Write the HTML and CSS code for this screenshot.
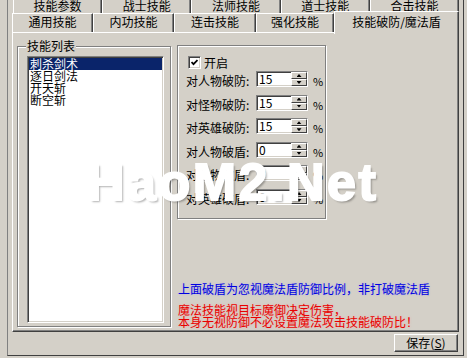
FILE: index.html
```html
<!DOCTYPE html>
<html lang="zh-CN">
<head>
<meta charset="utf-8">
<title>技能破防/魔法盾</title>
<link rel="stylesheet" href="styles.css">
</head>
<body>
<div class="frame">
  <div class="tabctl">
    <div class="row row1">
      <div class="tab">技能参数</div>
      <div class="tab">战士技能</div>
      <div class="tab">法师技能</div>
      <div class="tab">道士技能</div>
      <div class="tab">合击技能</div>
    </div>
    <div class="row row2">
      <div class="tab w81">通用技能</div>
      <div class="tab w81">内功技能</div>
      <div class="tab w82">连击技能</div>
      <div class="tab w78">强化技能</div>
      <div class="tab active">技能破防/魔法盾</div>
    </div>
    <div class="panel">
      <div class="group list-group">
        <span class="group-title">技能列表</span>
        <div class="listbox">
          <div class="item selected">刺杀剑术</div>
          <div class="item">逐日剑法</div>
          <div class="item">开天斩</div>
          <div class="item">断空斩</div>
        </div>
      </div>
      <div class="right">
        <div class="group opts">
          <div class="check-row">
            <span class="checkbox"><svg width="7" height="7" viewBox="0 0 7 7"><polyline points="0.5,3 2.5,5.2 6.5,1" fill="none" stroke="#000" stroke-width="1.8"/></svg></span>
            <span>开启</span>
          </div>
          <div class="fields">
            <div class="field"><span class="lbl">对人物破防:</span><div class="edit"><span>15</span><div class="spin"><div class="spin-btn"><i class="arr up"></i></div><div class="spin-btn"><i class="arr down"></i></div></div></div><span class="pct">%</span></div>
            <div class="field"><span class="lbl">对怪物破防:</span><div class="edit"><span>15</span><div class="spin"><div class="spin-btn"><i class="arr up"></i></div><div class="spin-btn"><i class="arr down"></i></div></div></div><span class="pct">%</span></div>
            <div class="field"><span class="lbl">对英雄破防:</span><div class="edit"><span>15</span><div class="spin"><div class="spin-btn"><i class="arr up"></i></div><div class="spin-btn"><i class="arr down"></i></div></div></div><span class="pct">%</span></div>
            <div class="field"><span class="lbl">对人物破盾:</span><div class="edit"><span>0</span><div class="spin"><div class="spin-btn"><i class="arr up"></i></div><div class="spin-btn"><i class="arr down"></i></div></div></div><span class="pct">%</span></div>
            <div class="field"><span class="lbl">对怪物破盾:</span><div class="edit"><span>0</span><div class="spin"><div class="spin-btn"><i class="arr up"></i></div><div class="spin-btn"><i class="arr down"></i></div></div></div><span class="pct">%</span></div>
            <div class="field"><span class="lbl">对英雄破盾:</span><div class="edit"><span>0</span><div class="spin"><div class="spin-btn"><i class="arr up"></i></div><div class="spin-btn"><i class="arr down"></i></div></div></div><span class="pct">%</span></div>
          </div>
        </div>
        <p class="note blue">上面破盾为忽视魔法盾防御比例，非打破魔法盾</p>
        <p class="note red">魔法技能视目标魔御决定伤害，<br>本身无视防御不必设置魔法攻击技能破防比！</p>
      </div>
    </div>
  </div>
  <div class="btnbar"><button class="btn">保存(<u>S</u>)</button></div>
</div>
<div class="watermark">HaoM2.Net</div>
</body>
</html>
```

FILE: styles.css
```css
* { box-sizing: border-box; }
html, body { margin: 0; padding: 0; }
body {
  width: 467px;
  height: 358px;
  overflow: hidden;
  position: relative;
  background: #d4d0c8;
  color: #000;
  font: 12px/12px "Noto Sans CJK SC", "Liberation Sans", sans-serif;
}

.frame {
  margin-left: 7px;
  width: 457px;
  height: 356px;
  border-left: 1px solid #808080;
  border-right: 1px solid #404040;
  border-bottom: 1px solid #404040;
  padding-left: 4px;
  display: flex;
  flex-direction: column;
}

.tabctl { width: 447px; display: flex; flex-direction: column; }

.row { display: flex; }
.row1 { height: 13px; margin-left: 1px; }
.row1 .tab {
  flex: 1;
  border-left: 1px solid #fff;
  border-right: 1px solid #404040;
  box-shadow: inset -1px 0 #808080;
  text-align: center;
  line-height: 11px;
  white-space: nowrap;
}

.row2 { height: 19px; }
.row2 .tab {
  border-top: 1px solid #fff;
  border-left: 1px solid #fff;
  border-right: 1px solid #404040;
  box-shadow: inset -1px 0 #808080;
  text-align: center;
  padding-top: 2px;
  line-height: 12px;
  white-space: nowrap;
  background: #d4d0c8;
}
.row2 .w81 { width: 81px; }
.row2 .w82 { width: 82px; }
.row2 .w78 { width: 78px; }
.row2 .tab.active {
  flex: 1;
  margin-top: -2px;
  margin-bottom: -2px;
  padding-top: 4px;
  position: relative;
  z-index: 1;
}

.panel {
  width: 447px;
  height: 300px;
  border-top: 1px solid #fff;
  border-left: 1px solid #fff;
  border-right: 1px solid #404040;
  border-bottom: 1px solid #404040;
  box-shadow: inset -1px -1px #808080;
  display: flex;
  align-items: flex-start;
  padding: 12px 0 0 4px;
}

.group {
  position: relative;
  border: 1px solid #808080;
  box-shadow: 1px 1px 0 #fff, inset 1px 1px 0 #fff;
}

.list-group {
  width: 154px;
  height: 281px;
  margin-top: 1px;
  padding: 9px 0 0 9px;
}
.group-title {
  position: absolute;
  left: 8px;
  top: -7px;
  padding: 0 1px;
  background: #d4d0c8;
  line-height: 12px;
}

.listbox {
  width: 137px;
  height: 267px;
  background: #fff;
  border: 1px solid;
  border-color: #808080 #fff #fff #808080;
  box-shadow: inset 1px 1px #404040, inset -1px -1px #d4d0c8;
  padding: 1px;
}
.item {
  height: 12px;
  line-height: 12px;
  padding-left: 1px;
  white-space: nowrap;
}
.item.selected { background: #0a246a; color: #fff; }

.right {
  margin-left: 6px;
  display: flex;
  flex-direction: column;
}

.opts {
  width: 149px;
  height: 174px;
  padding: 10px 0 0 8px;
}

.check-row {
  display: flex;
  align-items: center;
  height: 13px;
  margin-left: 2px;
}
.checkbox {
  width: 13px;
  height: 13px;
  margin-right: 3px;
  background: #fff;
  border: 1px solid;
  border-color: #808080 #fff #fff #808080;
  box-shadow: inset 1px 1px #404040, inset -1px -1px #d4d0c8;
  display: flex;
  align-items: center;
  justify-content: center;
}
.checkbox svg { display: block; }

.fields {
  display: flex;
  flex-direction: column;
  gap: 7.6px;
  margin-top: 2px;
}
.field {
  display: flex;
  align-items: flex-end;
  height: 16px;
}
.lbl { width: 70px; line-height: 12px; white-space: nowrap; }
.edit {
  position: relative;
  width: 52px;
  height: 16px;
  background: #fff;
  border: 1px solid;
  border-color: #808080 #fff #fff #808080;
  box-shadow: inset 1px 1px #404040, inset -1px -1px #d4d0c8;
  padding: 1px 0 0 2px;
  line-height: 12px;
}
.spin {
  position: absolute;
  top: 0;
  bottom: 0;
  right: 0;
  width: 16px;
  display: flex;
  flex-direction: column;
}
.spin-btn {
  flex: 1;
  background: #d4d0c8;
  border: 1px solid;
  border-color: #fff #404040 #404040 #fff;
  display: flex;
  align-items: center;
  justify-content: center;
}
.arr {
  display: block;
  width: 5px;
  height: 3px;
  background: #000;
}
.arr.up { clip-path: polygon(50% 0, 100% 100%, 0 100%); }
.arr.down { clip-path: polygon(0 0, 100% 0, 50% 100%); }
.pct { margin-left: 5px; font-size: 11px; line-height: 12px; }

.note { margin: 0 0 0 1px; line-height: 12px; white-space: nowrap; }
.blue {
  color: #0000e0;
  margin-top: 64px;
  text-shadow: 0 0 2px rgba(140, 140, 255, 0.45);
}
.red {
  color: #e80000;
  margin-top: 9px;
  text-shadow: 0 0 2px rgba(255, 140, 140, 0.5);
}

.btnbar {
  width: 447px;
  display: flex;
  justify-content: flex-end;
  padding: 2px 1px 0 0;
}
.btn {
  width: 64px;
  height: 18px;
  padding: 0;
  font: inherit;
  line-height: 12px;
  color: #000;
  background: #d4d0c8;
  border: 1px solid;
  border-color: #fff #404040 #404040 #fff;
  box-shadow: inset -1px -1px #808080;
}

.watermark {
  position: absolute;
  left: 87px;
  top: 156px;
  font: bold 52px/52px "Liberation Sans", sans-serif;
  letter-spacing: 2.5px;
  color: #fff;
  -webkit-text-stroke: 2px #fff;
  text-shadow: 2px 2px 2px rgba(0, 0, 0, 0.3);
  white-space: nowrap;
  pointer-events: none;
}
```
